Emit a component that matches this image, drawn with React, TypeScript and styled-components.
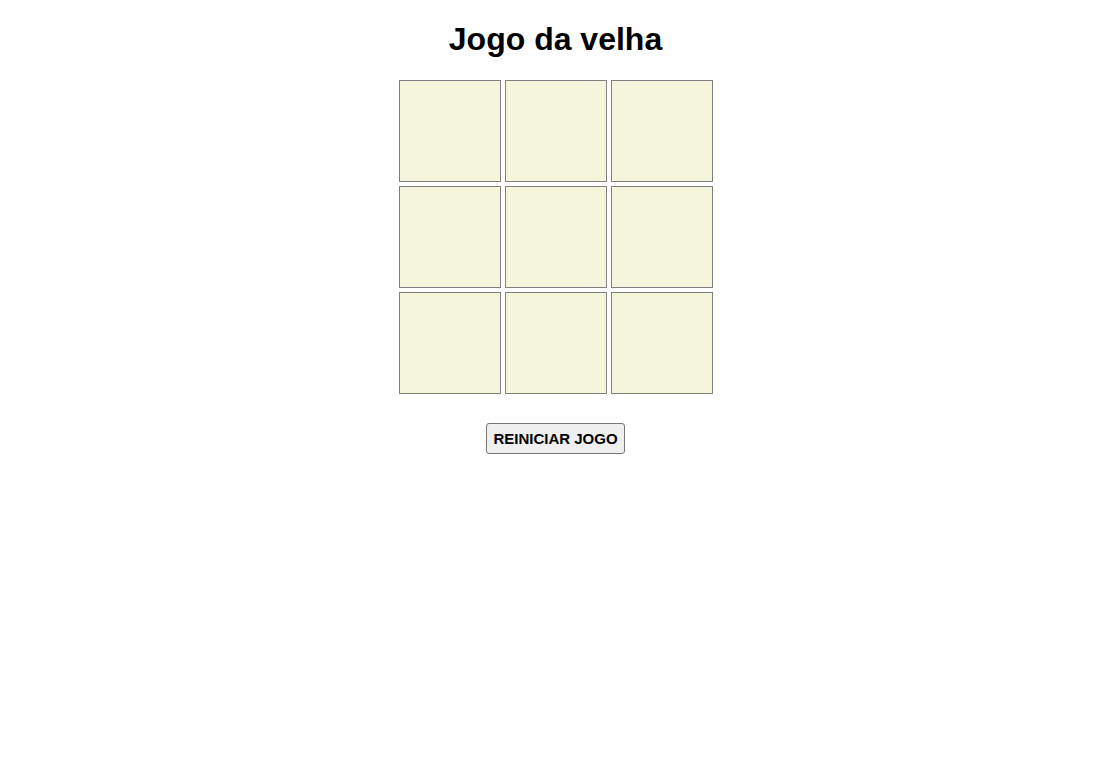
import React, { useState } from "react";
import styled, { createGlobalStyle } from "styled-components";

const GlobalStyle = createGlobalStyle`
  html, body {
    margin: 0;
    padding: 0;
    background: #ffffff;
    font-family: "Liberation Sans", Arial, sans-serif;
  }
`;

const Page = styled.main`
  display: flex;
  flex-direction: column;
  align-items: center;
  padding-top: 21px;
`;

const Title = styled.h1`
  margin: 0 0 22px;
  font-size: 32px;
  line-height: 37px;
  font-weight: 700;
  color: #000000;
`;

const Board = styled.div`
  display: grid;
  grid-template-columns: repeat(3, 102px);
  grid-auto-rows: 102px;
  gap: 4px;
`;

const Cell = styled.button`
  box-sizing: border-box;
  width: 102px;
  height: 102px;
  margin: 0;
  padding: 0;
  background: #f5f5dc;
  border: 1px solid #808080;
  border-radius: 0;
  font-family: "Liberation Sans", Arial, sans-serif;
  font-size: 48px;
  font-weight: 700;
  color: #000000;
  cursor: pointer;
`;

const ResetButton = styled.button`
  box-sizing: border-box;
  margin-top: 29px;
  width: 139px;
  height: 31px;
  padding: 0;
  background: #efefef;
  border: 1px solid #767676;
  border-radius: 3px;
  font-family: "Liberation Sans", Arial, sans-serif;
  font-size: 15px;
  font-weight: 700;
  line-height: 17px;
  color: #000000;
  cursor: pointer;
`;

export default function App() {
  const [cells, setCells] = useState<string[]>(Array(9).fill(""));
  const [turn, setTurn] = useState<"X" | "O">("X");

  const play = (i: number) => {
    if (cells[i]) return;
    const next = cells.slice();
    next[i] = turn;
    setCells(next);
    setTurn(turn === "X" ? "O" : "X");
  };

  const reset = () => {
    setCells(Array(9).fill(""));
    setTurn("X");
  };

  return (
    <>
      <GlobalStyle />
      <Page>
        <Title>Jogo da velha</Title>
        <Board>
          {cells.map((c, i) => (
            <Cell key={i} onClick={() => play(i)}>
              {c}
            </Cell>
          ))}
        </Board>
        <ResetButton onClick={reset}>REINICIAR JOGO</ResetButton>
      </Page>
    </>
  );
}
